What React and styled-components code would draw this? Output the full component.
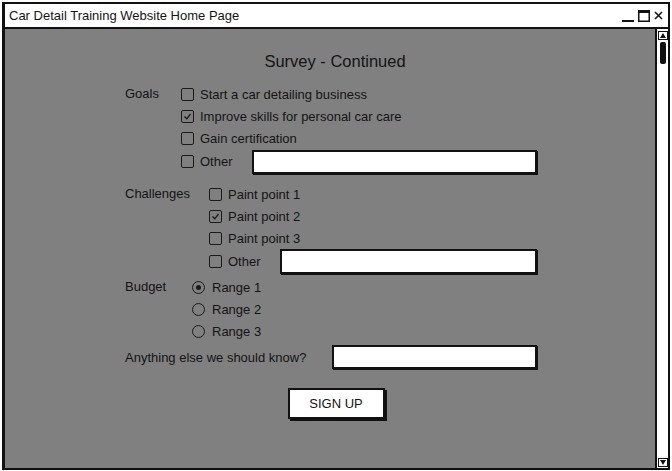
import React from 'react';
import styled, { createGlobalStyle } from 'styled-components';

const GlobalStyle = createGlobalStyle`
    body {
        margin: 0;
        background: #fff;
        font-family: "Liberation Sans", Arial, sans-serif;
        color: #141414;
    }
`;

const Window = styled.div`
    box-sizing: border-box;
    margin: 2px;
    width: 668px;
    height: 468px;
    border: 2px solid #111;
    border-left-width: 3px;
    display: flex;
    flex-direction: column;
    overflow: hidden;
`;

const TitleBar = styled.div`
    height: 23px;
    flex: none;
    background: #fff;
    border-bottom: 2px solid #111;
    display: flex;
    align-items: center;
    justify-content: space-between;
    padding: 0 5px 0 4px;
    font-size: 13px;
`;

const Controls = styled.div`
    display: flex;
    align-items: center;
    gap: 4px;
`;

const Body = styled.div`
    flex: 1;
    display: flex;
    min-height: 0;
`;

const Content = styled.div`
    flex: 1;
    background: #808080;
    padding-top: 22px;
`;

const Heading = styled.h1`
    margin: 0 0 12px;
    padding-left: 10px;
    font-size: 16.5px;
    font-weight: normal;
    line-height: 20px;
    text-align: center;
`;

const Form = styled.div`
    margin-left: 120px;
    width: 412px;
    display: flex;
    flex-direction: column;
`;

const Section = styled.div`
    display: flex;
    margin-bottom: ${p => p.$gap || 0}px;
`;

const Label = styled.div`
    width: ${p => p.$width}px;
    flex: none;
    height: 22px;
    line-height: 22px;
    font-size: 13px;
`;

const Options = styled.div`
    flex: 1;
    display: flex;
    flex-direction: column;
`;

const Option = styled.div`
    display: flex;
    align-items: center;
    gap: ${p => p.$gap || 6}px;
    height: ${p => p.$height || 22}px;
    font-size: 13px;
`;

const OtherItem = styled.div`
    width: 65px;
    flex: none;
    display: flex;
    align-items: center;
    gap: 6px;
`;

const Box = styled.span`
    box-sizing: border-box;
    width: 13px;
    height: 13px;
    border: 1.5px solid #1a1a1a;
    border-radius: 2px;
    display: inline-flex;
    align-items: center;
    justify-content: center;
    flex: none;
`;

const Radio = styled.span`
    box-sizing: border-box;
    width: 13px;
    height: 13px;
    border: 1.5px solid #1a1a1a;
    border-radius: 50%;
    display: inline-flex;
    align-items: center;
    justify-content: center;
    flex: none;

    &::after {
        content: '';
        width: 5px;
        height: 5px;
        border-radius: 50%;
        background: ${p => (p.$on ? '#1a1a1a' : 'transparent')};
    }
`;

const TextInput = styled.div`
    box-sizing: border-box;
    flex: 1;
    height: ${p => p.$height || 24}px;
    background: #fff;
    border: 2px solid #111;
    box-shadow: 1px 1px 0 #111;
`;

const Row = styled.div`
    display: flex;
    align-items: center;
    height: 26px;
    font-size: 13px;
    margin-bottom: 18px;
`;

const RowLabel = styled.div`
    width: 207px;
    flex: none;
`;

const ButtonWrap = styled.div`
    display: flex;
    justify-content: center;
    padding-left: 12px;
`;

const Button = styled.div`
    box-sizing: border-box;
    width: 97px;
    height: 31px;
    background: #fff;
    border: 2px solid #111;
    box-shadow: 2px 2px 0 #111;
    display: flex;
    align-items: center;
    justify-content: center;
    font-size: 13px;
`;

const Scrollbar = styled.div`
    width: 11px;
    flex: none;
    background: #fff;
    border-left: 2px solid #111;
    display: flex;
    flex-direction: column;
    justify-content: space-between;
    align-items: center;
    padding: 2px 0 1px;
`;

const ArrowBtn = styled.div`
    box-sizing: border-box;
    width: 10px;
    height: 9px;
    border: 1px solid #111;
    display: flex;
    align-items: center;
    justify-content: center;
`;

const Thumb = styled.div`
    width: 6px;
    height: 22px;
    border-radius: 2px;
    background: #111;
    margin-top: 2px;
`;

const Top = styled.div`
    display: flex;
    flex-direction: column;
    align-items: center;
`;

const Check = () => (
    <svg width="9" height="9" viewBox="0 0 9 9">
        <path d="M1.5 4.5 L3.8 6.8 L7.5 2" fill="none" stroke="#1a1a1a" strokeWidth="1.3" />
    </svg>
);

const CheckBox = ({ on }) => <Box>{on && <Check />}</Box>;

const Tri = ({ down }) => (
    <svg width="6" height="5" viewBox="0 0 6 5">
        <path d={down ? 'M0 0 L6 0 L3 5 Z' : 'M0 5 L6 5 L3 0 Z'} fill="#111" />
    </svg>
);

const CheckGroup = ({ label, width, gap, items, checked, inputHeight }) => (
    <Section $gap={gap}>
        <Label $width={width}>{label}</Label>
        <Options>
            {items.map((t, i) => (
                <Option key={t}>
                    <CheckBox on={i === checked} />
                    {t}
                </Option>
            ))}
            <Option $height={25}>
                <OtherItem>
                    <CheckBox />
                    Other
                </OtherItem>
                <TextInput $height={inputHeight} />
            </Option>
        </Options>
    </Section>
);

export default function App() {
    return (
        <>
            <GlobalStyle />
            <Window>
                <TitleBar>
                    <span>Car Detail Training Website Home Page</span>
                    <Controls>
                        <svg width="12" height="12" viewBox="0 0 12 12">
                            <path d="M0 11 H12" stroke="#111" strokeWidth="2" />
                        </svg>
                        <svg width="12" height="12" viewBox="0 0 12 12">
                            <rect x="0.75" y="0.75" width="10.5" height="10.5" fill="none" stroke="#111" strokeWidth="1.5" />
                            <rect x="0" y="0" width="12" height="3" fill="#111" />
                        </svg>
                        <svg width="9" height="9" viewBox="0 0 9 9">
                            <path d="M1 1 L8 8 M8 1 L1 8" stroke="#111" strokeWidth="1.5" />
                        </svg>
                    </Controls>
                </TitleBar>
                <Body>
                    <Content>
                        <Heading>Survey - Continued</Heading>
                        <Form>
                            <CheckGroup
                                label="Goals"
                                width={56}
                                gap={9}
                                checked={1}
                                items={['Start a car detailing business', 'Improve skills for personal car care', 'Gain certification']}
                            />
                            <CheckGroup
                                label="Challenges"
                                width={84}
                                gap={2}
                                checked={1}
                                inputHeight={25}
                                items={['Paint point 1', 'Paint point 2', 'Paint point 3']}
                            />
                            <Section $gap={2}>
                                <Label $width={67}>Budget</Label>
                                <Options>
                                    {['Range 1', 'Range 2', 'Range 3'].map((t, i) => (
                                        <Option key={t} $gap={7}>
                                            <Radio $on={i === 0} />
                                            {t}
                                        </Option>
                                    ))}
                                </Options>
                            </Section>
                            <Row>
                                <RowLabel>Anything else we should know?</RowLabel>
                                <TextInput />
                            </Row>
                        </Form>
                        <ButtonWrap>
                            <Button>SIGN UP</Button>
                        </ButtonWrap>
                    </Content>
                    <Scrollbar>
                        <Top>
                            <ArrowBtn><Tri /></ArrowBtn>
                            <Thumb />
                        </Top>
                        <ArrowBtn><Tri down /></ArrowBtn>
                    </Scrollbar>
                </Body>
            </Window>
        </>
    );
}
